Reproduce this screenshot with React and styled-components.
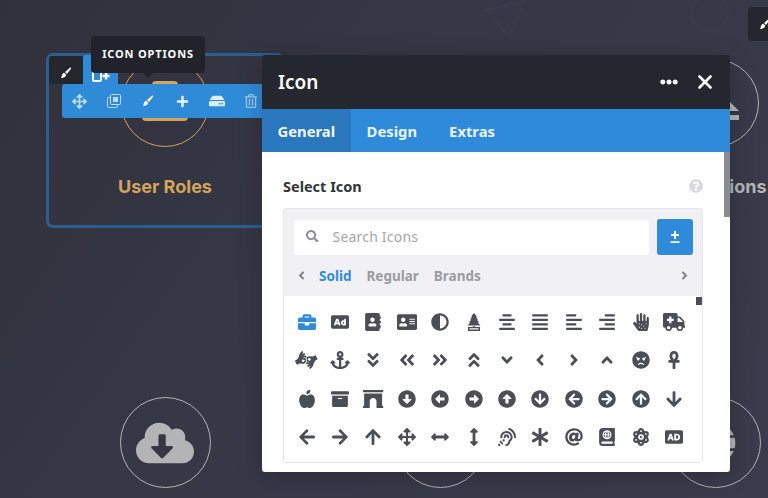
import React from "react";
import styled, { createGlobalStyle } from "styled-components";
import {
  FaBriefcase, FaAd, FaAddressBook, FaAddressCard, FaAdjust, FaAlignCenter, FaAlignJustify,
  FaAlignLeft, FaAlignRight, FaAllergies, FaAmbulance, FaAmericanSignLanguageInterpreting, FaAnchor,
  FaAngleDoubleDown, FaAngleDoubleLeft, FaAngleDoubleRight, FaAngleDoubleUp, FaAngleDown, FaAngleLeft,
  FaAngleRight, FaAngleUp, FaAngry, FaAnkh, FaAppleAlt, FaArchive, FaArchway, FaArrowAltCircleDown,
  FaArrowAltCircleLeft, FaArrowAltCircleRight, FaArrowAltCircleUp, FaArrowCircleDown, FaArrowCircleLeft,
  FaArrowCircleRight, FaArrowCircleUp, FaArrowDown, FaArrowLeft, FaArrowRight, FaArrowUp, FaArrowsAlt,
  FaArrowsAltH, FaArrowsAltV, FaAssistiveListeningSystems, FaAsterisk, FaAt, FaAtlas, FaAtom, FaAudioDescription,
  FaCloudDownloadAlt, FaGlobe, FaPlus, FaRegTrashAlt, FaSearch, FaQuestionCircle,
  FaEllipsisH, FaHdd,
} from "react-icons/fa";

const Global = createGlobalStyle`
  html, body { margin: 0; padding: 0; width: 768px; height: 498px; overflow: hidden; }
  * { box-sizing: border-box; }
`;

const Page = styled.div`
  position: relative;
  width: 768px;
  height: 498px;
  overflow: hidden;
  font-family: "Noto Sans", "Open Sans", sans-serif;
  background: linear-gradient(125deg, #30313c 0%, #373846 45%, #3a3b4c 100%);
`;

const CardGrid = styled.div`
  display: grid;
  grid-template-columns: repeat(3, 238px);
  grid-auto-rows: 175px;
  column-gap: 37px;
  row-gap: 165px;
  padding: 53px 0 0 46px;
  width: 1000px;
`;

const Card = styled.div`
  display: flex;
  flex-direction: column;
  align-items: center;
  border: 3px solid ${(p) => (p.$active ? "#2b5f93" : "transparent")};
  border-radius: 7px;
  padding-top: ${(p) => p.$top}px;
`;

const Circle = styled.div`
  width: ${(p) => p.$d}px;
  height: ${(p) => p.$d}px;
  flex: none;
  border-radius: 50%;
  border: 1.5px solid ${(p) => p.$color};
  color: ${(p) => p.$color};
  display: flex;
  align-items: center;
  justify-content: center;
  font-size: ${(p) => p.$size || 42}px;
`;

const CardTitle = styled.div`
  margin-top: 29px;
  font-family: Inter, "Noto Sans", sans-serif;
  font-size: 18px;
  line-height: 22px;
  font-weight: 700;
  color: ${(p) => p.$color};
`;

const Faint = styled.svg`
  position: absolute;
  top: 0;
  left: ${(p) => p.$left}px;
`;

const EditTabs = styled.div`
  position: absolute;
  left: 49px;
  top: 55px;
  display: flex;
  align-items: flex-end;
`;

const EditTab = styled.div`
  height: ${(p) => p.$h}px;
  width: ${(p) => p.$w}px;
  background: ${(p) => p.$bg};
  display: flex;
  align-items: center;
  justify-content: center;
  padding-top: ${(p) => p.$pt || 0}px;
  border-radius: 3px 3px 0 0;
`;

const CornerTab = styled.div`
  position: absolute;
  left: 748px;
  top: 7px;
  width: 30px;
  height: 34px;
  background: #26272e;
  border-radius: 4px 0 0 4px;
  display: flex;
  align-items: center;
  padding-left: 11px;
`;

const Toolbar = styled.div`
  position: absolute;
  left: 62px;
  top: 84px;
  width: 230px;
  height: 34px;
  background: #2f8bd8;
  border-radius: 3px;
  display: flex;
`;

const ToolButton = styled.div`
  width: 34.4px;
  height: 34px;
  display: flex;
  align-items: center;
  justify-content: center;
  color: ${(p) => p.$color || "#bcdcf6"};
  font-size: ${(p) => p.$size || 14}px;
`;

const Tooltip = styled.div`
  position: absolute;
  left: 91px;
  top: 36px;
  width: 114px;
  height: 37px;
  background: #22232a;
  border-radius: 4px;
  color: #fff;
  font-size: 11px;
  font-weight: 700;
  letter-spacing: 0.85px;
  display: flex;
  align-items: center;
  justify-content: center;
  padding-bottom: 2px;

  &::after {
    content: "";
    position: absolute;
    left: 52px;
    bottom: -5px;
    border-left: 5px solid transparent;
    border-right: 5px solid transparent;
    border-top: 5px solid #22232a;
  }
`;

const Modal = styled.div`
  position: absolute;
  left: 262px;
  top: 55px;
  width: 468px;
  height: 417px;
  display: flex;
  flex-direction: column;
  border-radius: 3px;
  overflow: hidden;
  box-shadow: 0 4px 24px rgba(0, 0, 0, 0.22);
`;

const ModalHeader = styled.div`
  height: 54px;
  flex: none;
  background: #25272e;
  color: #fff;
  display: flex;
  align-items: center;
  padding: 0 18px 0 16px;
`;

const ModalTitle = styled.div`
  font-size: 19px;
  font-weight: 600;
  flex: 1;
`;

const HeaderButton = styled.div`
  display: flex;
  align-items: center;
  margin-left: ${(p) => p.$gap || 0}px;
  font-size: ${(p) => p.$size || 18}px;
`;

const TabBar = styled.div`
  height: 43px;
  flex: none;
  background: #2f8bd9;
  display: flex;
`;

const Tab = styled.div`
  display: flex;
  align-items: center;
  padding: 0 ${(p) => (p.$active ? 15.5 : 16)}px;
  background: ${(p) => (p.$active ? "#2a77bd" : "transparent")};
  color: ${(p) => (p.$active ? "#f2f7fc" : "#e8f3fc")};
  font-size: 14.8px;
  font-weight: 700;
`;

const Body = styled.div`
  position: relative;
  flex: 1;
  background: #fff;
  padding: 22px 27px 9px 21px;
  display: flex;
  flex-direction: column;
`;

const ScrollThumb = styled.div`
  position: absolute;
  right: 0;
  top: 0;
  width: 6px;
  height: 65px;
  background: #8b8c92;
`;

const FieldLabel = styled.div`
  display: flex;
  align-items: center;
  justify-content: space-between;
  height: 24px;
  font-size: 14.5px;
  font-weight: 700;
  color: #32343a;
  margin-bottom: 10px;
`;

const Help = styled.div`
  display: flex;
  color: #d9d9dc;
  font-size: 14px;
`;

const Panel = styled.div`
  position: relative;
  flex: 1;
  border: 1px solid #e6e6eb;
  border-radius: 3px;
  background: #f1f1f5;
  display: flex;
  flex-direction: column;
`;

const SearchRow = styled.div`
  display: flex;
  gap: 8px;
  padding: 10px 9px 0 10px;
  align-items: center;
`;

const SearchBox = styled.div`
  flex: 1;
  height: 35px;
  background: #fff;
  border-radius: 3px;
  display: flex;
  align-items: center;
  gap: 14px;
  padding: 0 0 2px 12px;
  font-size: 14px;
  color: #a5a6ac;
  letter-spacing: 0.2px;
`;

const SearchIcon = styled.span`
  display: flex;
  color: #8e8f95;
  font-size: 12.5px;
`;

const AddButton = styled.div`
  width: 36px;
  height: 36px;
  background: #2f8bd9;
  border-radius: 3px;
  display: flex;
  align-items: center;
  justify-content: center;
`;

const CategoryRow = styled.div`
  height: 41px;
  display: flex;
  align-items: center;
  padding: 0 11px 0 11px;
  font-size: 13.5px;
  font-weight: 700;
  flex: none;
`;

const Chevron = styled.span`
  display: flex;
  font-size: 13px;
  color: #84858c;
  margin-right: ${(p) => p.$mr || 0}px;
  margin-left: ${(p) => (p.$push ? "auto" : 0)};
`;

const Category = styled.span`
  margin-right: 15px;
  color: ${(p) => (p.$active ? "#2f8bd9" : "#9a9ba1")};
`;

const IconArea = styled.div`
  position: relative;
  flex: 1;
  background: #fff;
  display: grid;
  grid-template-columns: repeat(12, 33.4px);
  grid-auto-rows: 38.5px;
  padding: 6.5px 0 0 6px;
`;

const IconCell = styled.div`
  display: flex;
  align-items: center;
  justify-content: center;
  color: ${(p) => (p.$active ? "#2f8bd9" : "#4a4e57")};

  svg {
    height: 18px;
    width: ${(p) => p.$w || 18}px;
    flex: none;
  }
`;

const GridThumb = styled.div`
  position: absolute;
  right: 0;
  top: 1px;
  width: 6px;
  height: 8px;
  background: #4a4e57;
`;

const TreeIcon = () => (
  <svg viewBox="0 0 14 18" fill="currentColor">
    <path d="M7 0L10 3.600H8.800L11 6.400H9.600L12.200 9.400H10.600L13.500 12.600H0.500L3.400 9.400H1.800L4.400 6.400H3L5.200 3.600H4Z" />
    <path d="M5.800 13.200H8.200V14H13V18H1V14H5.800ZM2.500 15.300V16.600H11.500V15.300Z" />
  </svg>
);

const icons = [
  [FaBriefcase], [FaAd], [FaAddressBook], [FaAddressCard, 20.25], [FaAdjust], [TreeIcon, 14], [FaAlignCenter], [FaAlignJustify],
  [FaAlignLeft], [FaAlignRight], [FaAllergies], [FaAmbulance, 22.5], [FaAmericanSignLanguageInterpreting, 22.5], [FaAnchor, 20.25],
  [FaAngleDoubleDown], [FaAngleDoubleLeft], [FaAngleDoubleRight], [FaAngleDoubleUp], [FaAngleDown], [FaAngleLeft],
  [FaAngleRight], [FaAngleUp], [FaAngry], [FaAnkh], [FaAppleAlt], [FaArchive], [FaArchway, 20.25], [FaArrowAltCircleDown],
  [FaArrowAltCircleLeft], [FaArrowAltCircleRight], [FaArrowAltCircleUp], [FaArrowCircleDown], [FaArrowCircleLeft],
  [FaArrowCircleRight], [FaArrowCircleUp], [FaArrowDown], [FaArrowLeft], [FaArrowRight], [FaArrowUp], [FaArrowsAlt],
  [FaArrowsAltH], [FaArrowsAltV], [FaAssistiveListeningSystems], [FaAsterisk], [FaAt], [FaAtlas], [FaAtom], [FaAudioDescription],
];

const Gold = "#d3a45c";
const Grey = "#b4b4b6";

const AddRowIcon = () => (
  <svg width="18" height="14" viewBox="0 0 18 14" fill="none">
    <rect x="1" y="1" width="8" height="11" rx="1" stroke="#fff" strokeWidth="2" />
    <path d="M14 3.500v7M10.500 7h7" stroke="#fff" strokeWidth="2.400" />
  </svg>
);

const PlusLine = () => (
  <svg width="14" height="14" viewBox="0 0 14 14" fill="none">
    <path d="M7 1v8M3 5h8" stroke="#fff" strokeWidth="2" />
    <path d="M2.500 12.200h9" stroke="#fff" strokeWidth="1.800" />
  </svg>
);

const Brush = ({ size = 12 }) => (
  <svg width={size} height={size} viewBox="0 0 24 24" fill="#fff">
    <path d="M20 1.500c1.200-.9 2.800.7 1.900 1.900L14 14l-4-4z" />
    <path d="M8.500 11.500l4 4c-.5 3-2.500 4.500-5 5.500L1.500 22.500c1.800-1.500 1.500-3 2-5 .6-3 2.500-5.500 5-6z" />
  </svg>
);

const CopyIcon = () => (
  <svg width="14" height="14" viewBox="0 0 14 14" fill="none" stroke="currentColor" strokeWidth="1">
    <rect x="3.500" y="0.500" width="10" height="10" rx="1" />
    <path d="M3.500 3.500H1.500a1 1 0 00-1 1v8a1 1 0 001 1h8a1 1 0 001-1v-2" />
    <rect x="6" y="3" width="5" height="5" fill="currentColor" stroke="none" />
  </svg>
);

const CloseIcon = () => (
  <svg width="14" height="14" viewBox="0 0 14 14" fill="none" stroke="#fff" strokeWidth="2.600" strokeLinecap="round">
    <path d="M1.500 1.500l11 11M12.500 1.500l-11 11" />
  </svg>
);

const GoldMark = () => (
  <svg width="46" height="44" viewBox="0 0 46 44" fill={Gold}>
    <path d="M10 4a4 4 0 014-4h18a4 4 0 014 4v14H10z" />
    <path d="M0 20h46v16a4 4 0 01-4 4H4a4 4 0 01-4-4z" />
  </svg>
);

const EjectMark = () => (
  <svg width="48" height="33" viewBox="0 0 48 33" fill={Grey}>
    <path d="M24 0L48 24H0Z" />
    <rect y="28" width="48" height="5" />
  </svg>
);

export default function App() {
  return (
    <Page>
      <Global />
      <Faint $left={485} width="45" height="44" viewBox="0 0 45 44" fill="none" stroke="#3b3c4b" strokeWidth="2">
        <path d="M2 10L38 1L25 38Z" />
      </Faint>
      <Faint $left={685} width="60" height="44" viewBox="0 0 60 44" fill="none" stroke="#3b3c4b" strokeWidth="2">
        <circle cx="25" cy="13" r="18" />
      </Faint>
      <CardGrid>
        <Card $active $top={3}>
          <Circle $d={88} $color={Gold}><GoldMark /></Circle>
          <CardTitle $color={Gold}>User Roles</CardTitle>
        </Card>
        <Card $top={3}>
          <Circle $d={88} $color={Grey}><FaAtom /></Circle>
          <CardTitle $color={Grey}>Settings</CardTitle>
        </Card>
        <Card $top={3}>
          <Circle $d={88} $color={Grey}><EjectMark /></Circle>
          <CardTitle $color={Grey}>Bar Options</CardTitle>
        </Card>
        <Card $top={1}>
          <Circle $d={91} $color={Grey} $size={58}><FaCloudDownloadAlt /></Circle>
        </Card>
        <Card $top={1}>
          <Circle $d={91} $color={Grey}><FaAtom /></Circle>
        </Card>
        <Card $top={1}>
          <Circle $d={91} $color={Grey}><FaGlobe /></Circle>
        </Card>
      </CardGrid>

      <CornerTab><Brush /></CornerTab>
      <EditTabs>
        <EditTab $w={34} $h={28} $bg="#26272e" $pt={6}><Brush /></EditTab>
        <EditTab $w={35} $h={29} $bg="#2f8bd8" $pt={12}><AddRowIcon /></EditTab>
      </EditTabs>
      <Toolbar>
        <ToolButton $size={15}><FaArrowsAlt /></ToolButton>
        <ToolButton><CopyIcon /></ToolButton>
        <ToolButton><Brush /></ToolButton>
        <ToolButton $color="#e9f4fd" $size={13}><FaPlus /></ToolButton>
        <ToolButton $color="#dcedfb" $size={16}><FaHdd /></ToolButton>
        <ToolButton $color="#9dcbf0"><FaRegTrashAlt /></ToolButton>
      </Toolbar>
      <Tooltip>ICON OPTIONS</Tooltip>

      <Modal>
        <ModalHeader>
          <ModalTitle>Icon</ModalTitle>
          <HeaderButton><FaEllipsisH /></HeaderButton>
          <HeaderButton $gap={20}><CloseIcon /></HeaderButton>
        </ModalHeader>
        <TabBar>
          <Tab $active>General</Tab>
          <Tab>Design</Tab>
          <Tab>Extras</Tab>
        </TabBar>
        <Body>
          <ScrollThumb />
          <FieldLabel>
            Select Icon
            <Help><FaQuestionCircle /></Help>
          </FieldLabel>
          <Panel>
            <SearchRow>
              <SearchBox>
                <SearchIcon><FaSearch /></SearchIcon>
                Search Icons
              </SearchBox>
              <AddButton><PlusLine /></AddButton>
            </SearchRow>
            <CategoryRow>
              <Chevron $mr={11}><FaAngleLeft /></Chevron>
              <Category $active>Solid</Category>
              <Category>Regular</Category>
              <Category>Brands</Category>
              <Chevron $push><FaAngleRight /></Chevron>
            </CategoryRow>
            <IconArea>
              <GridThumb />
              {icons.map(([I, w], i) => (
                <IconCell key={i} $active={i === 0} $w={w}><I /></IconCell>
              ))}
            </IconArea>
          </Panel>
        </Body>
      </Modal>
    </Page>
  );
}
